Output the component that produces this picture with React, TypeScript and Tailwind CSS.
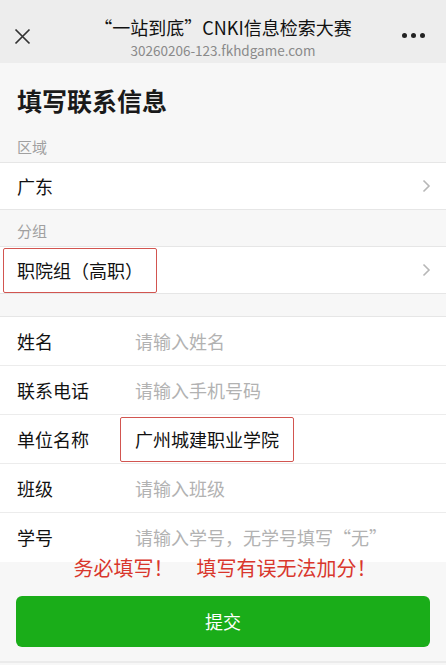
import React from "react";

const font = { fontFamily: '"Noto Sans CJK SC", "Noto Sans", sans-serif' };

function Chevron() {
  return (
    <svg width="9" height="14" viewBox="0 0 9 14" className="shrink-0">
      <polyline points="1.5,1.5 7,7 1.5,12.5" fill="none" stroke="#b7b7b7" strokeWidth="1.6" />
    </svg>
  );
}

function InputRow({ label, placeholder, children }: { label: string; placeholder?: string; children?: React.ReactNode }) {
  return (
    <div className="flex h-[49px] items-center pl-[17px] pr-[17px]">
      <div className="w-[118px] shrink-0 text-[18px] text-[#111]">{label}</div>
      {children ?? <div className="text-[18px] text-[#b2b2b2]">{placeholder}</div>}
    </div>
  );
}

export default function App() {
  return (
    <div className="min-h-[665px] w-[446px] bg-[#f7f7f7]" style={font}>
      {/* header */}
      <div className="relative flex h-[63px] flex-col items-center bg-[#ededed] pt-[14px]">
        <div className="absolute left-[14px] top-[28px]">
          <svg width="17" height="17" viewBox="0 0 17 17">
            <path d="M1.5 1.5 L15.5 15.5 M15.5 1.5 L1.5 15.5" stroke="#333" strokeWidth="1.7" fill="none" />
          </svg>
        </div>
        <div className="absolute right-[21px] top-[33px] flex gap-[4px]">
          <span className="h-[5px] w-[5px] rounded-full bg-[#222]" />
          <span className="h-[5px] w-[5px] rounded-full bg-[#222]" />
          <span className="h-[5px] w-[5px] rounded-full bg-[#222]" />
        </div>
        <div className="text-[18px] leading-[26px] text-[#111]">“一站到底”CNKI信息检索大赛</div>
        <div className="mt-[1px] text-[13.5px] leading-[19px] text-[#8a8a8a]">30260206-123.fkhdgame.com</div>
      </div>

      {/* page title */}
      <div className="px-[17px] pt-[21px] text-[25px] font-bold leading-[32px] text-[#1a1a1a]">填写联系信息</div>

      <div className="px-[17px] pb-[5px] pt-[21px] text-[15px] leading-[20px] text-[#a0a0a0]">区域</div>
      <div className="border-y border-[#e6e6e6] bg-white">
        <div className="flex h-[46px] items-center justify-between pl-[17px] pr-[15px]">
          <span className="text-[18px] text-[#111]">广东</span>
          <Chevron />
        </div>
      </div>

      <div className="px-[17px] pb-[5px] pt-[11px] text-[15px] leading-[20px] text-[#a0a0a0]">分组</div>
      <div className="border-y border-[#e6e6e6] bg-white">
        <div className="flex h-[46px] items-center justify-between pl-[3px] pr-[15px]">
          <div className="flex h-[45px] w-[154px] items-center rounded-[2px] border-[1.5px] border-[#d25550] pl-[13px] text-[18px] text-[#111]">
            职院组（高职）
          </div>
          <Chevron />
        </div>
      </div>

      <div className="mt-[22px] divide-y divide-[#ececec] border-t border-[#e6e6e6] bg-white">
        <InputRow label="姓名" placeholder="请输入姓名" />
        <InputRow label="联系电话" placeholder="请输入手机号码" />
        <InputRow label="单位名称">
          <div className="-ml-[15px] flex h-[45px] w-[174px] items-center rounded-[2px] border-[1.5px] border-[#d25550] pl-[14px] text-[18px] text-[#111]">
            广州城建职业学院
          </div>
        </InputRow>
        <InputRow label="班级" placeholder="请输入班级" />
        <InputRow label="学号" placeholder="请输入学号，无学号填写“无”" />
      </div>

      <div className="-mt-[7px] flex justify-center gap-[23px] pl-[4px] text-[20px] leading-[26px] text-[#d9362c]">
        <span>务必填写！</span>
        <span>填写有误无法加分！</span>
      </div>

      <div className="px-[16px] pt-[15px]">
        <button className="flex h-[51px] w-full items-center justify-center rounded-[6px] bg-[#1aad19] text-[18px] text-white">
          提交
        </button>
      </div>
      <div className="mt-[14px] border-t-2 border-[#ebebeb]" />
    </div>
  );
}
